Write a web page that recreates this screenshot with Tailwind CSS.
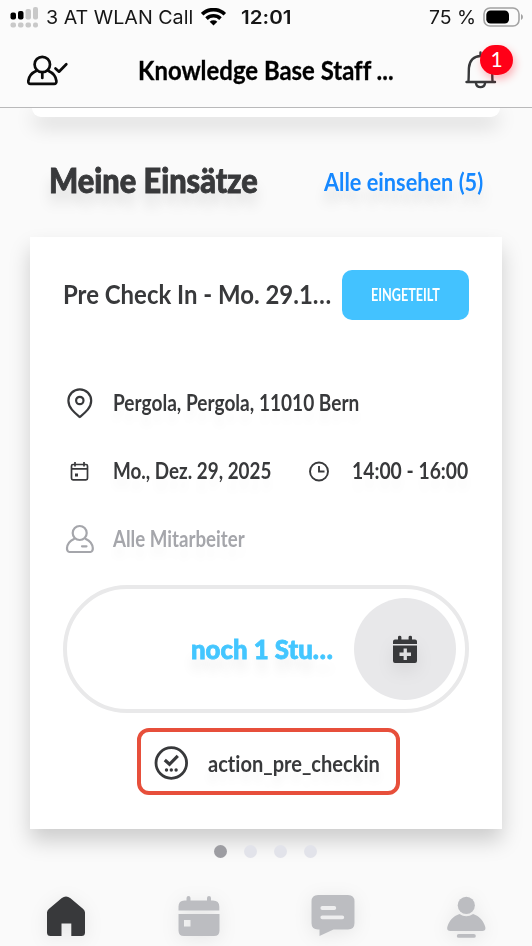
<!DOCTYPE html>
<html lang="de">
<head>
<meta charset="utf-8">
<meta name="viewport" content="width=device-width, initial-scale=1">
<title>Meine Einsätze</title>
<script src="https://cdn.jsdelivr.net/npm/@tailwindcss/browser@4"></script>
</head>
<body class="bg-[#fafafa]">
<div class="relative flex h-[946px] w-[532px] flex-col overflow-hidden bg-[#fafafa] font-['Lato','Open_Sans',sans-serif] text-[#38393b] [font-variant-ligatures:none]">

  <header class="relative z-10 h-[108px] shrink-0 border-b-[1.5px] border-[#b9b9ba] bg-[#fbfbfb] text-black">
    <div class="flex h-[34px] items-center pl-[10px] font-['Inter',sans-serif] text-[19px] leading-[32px] text-[#161616]">
      <svg class="mr-2 h-[22px] w-[28px] shrink-0" viewBox="10 5 28 22">
        <g fill="#000"><rect x="10.500" y="11.500" width="5.500" height="7" rx="2"/><rect x="18" y="10" width="5.500" height="8.500" rx="2"/></g>
        <g fill="#c9c9c9"><rect x="25.500" y="8" width="5.500" height="10.500" rx="2"/><rect x="33" y="6" width="5" height="12.500" rx="2"/><rect x="10.500" y="21.500" width="5.500" height="5" rx="2"/><rect x="18" y="21.500" width="5.500" height="5" rx="2"/><rect x="25.500" y="21.500" width="5.500" height="5" rx="2"/><rect x="33" y="21.500" width="5" height="5" rx="2"/></g>
      </svg>
      <div class="w-[155px] pt-[2px]"><span class="inline-block origin-left whitespace-nowrap" data-fit="147">3 AT WLAN Call</span></div>
      <svg class="h-[18px] w-[26px] shrink-0" viewBox="201 8 26 18" fill="none" stroke="#000" stroke-width="3.600">
        <path d="M202.200 14.200a16.200 16.200 0 0 1 22.600 0"/><path d="M206.500 18.600a10.200 10.200 0 0 1 14 0"/><path d="M213.500 25.500l-3.800-3.800a5.600 5.600 0 0 1 7.600 0z" fill="#000" stroke="none"/>
      </svg>
      <div class="ml-[14px] w-[188px] pt-[2px] font-semibold"><span class="inline-block origin-left whitespace-nowrap" data-fit="51">12:01</span></div>
      <div class="w-[53px] pt-[2px]"><span class="inline-block origin-left whitespace-nowrap" data-fit="47">75 %</span></div>
      <svg class="h-[20px] w-[42px] shrink-0" viewBox="482 6 42 20">
        <rect x="484" y="7" width="35" height="18" rx="6" fill="none" stroke="#a3a3a3" stroke-width="1.600"/><rect x="486.300" y="9.500" width="22.700" height="13" rx="4.300"/><path d="M521 13v6q2-1 2-3t-2-3" fill="#a3a3a3"/>
      </svg>
    </div>
    <div class="flex h-[73px] items-center pl-[26px]">
      <svg class="h-[34px] w-[44px] shrink-0" viewBox="26 53.500 44 34" fill="none" stroke="#0b0b0b" stroke-width="2.700" stroke-linecap="round" stroke-linejoin="round">
        <circle cx="42.300" cy="64" r="7.700"/><path d="M36.500 70.300c-4.500 2-7.700 5.700-8.200 10.200-.2 1.800.7 2.800 2.200 2.800h23.700c1.500 0 2.400-1 2.200-2.800-.5-4.500-3.700-8.200-8.200-10.200M42.300 72v5.500M55.500 68l3.500 3.200 7.300-7.400"/>
      </svg>
      <h1 class="ml-[68px] w-[326px] pb-[2px] text-[27px] leading-[34px] font-bold [-webkit-text-stroke:0.3px]"><span class="inline-block origin-left whitespace-nowrap" data-fit="256">Knowledge Base Staff ...</span></h1>
      <div class="relative">
        <svg class="h-[40px] w-[34px]" viewBox="464 51 34 40" fill="none" stroke="#38393b" stroke-width="2.400" stroke-linecap="round">
          <path d="M480.500 52.500v3M466.500 82h28.500M468.500 81c.3-4 .2-8 .4-13 .4-7.500 5.200-12 11.600-12s11.200 4.500 11.600 12c.2 5 .1 9 .4 13M476 83.500a4.600 4.600 0 0 0 9 0"/>
        </svg>
        <div class="absolute top-[-6px] left-[16px] flex h-[30px] w-[33px] items-center justify-center rounded-full bg-[#ff0017] pb-[3px] text-[21px] leading-none text-white shadow-[2px_4px_8px_rgba(255,0,23,0.3)]">1</div>
      </div>
    </div>
  </header>

  <main class="flex flex-col px-[30px]">
    <div class="mx-[2px] h-[9px] shrink-0 rounded-b-[10px] bg-white shadow-[0_8px_20px_rgba(0,0,0,0.2)]"></div>
    <div class="flex h-[120px] items-center pt-[7px] pl-[19px] text-shadow-[0_12px_14px_rgba(0,0,0,0.13)]">
      <h2 class="w-[275px] shrink-0 pb-[1px] text-[34px] leading-[40px] font-black [-webkit-text-stroke:0.9px]"><span class="inline-block origin-left whitespace-nowrap" data-fit="209">Meine Einsätze</span></h2>
      <a class="shrink-0 text-[25px] leading-[30px] font-bold whitespace-nowrap text-[#1688ff]"><span class="inline-block origin-left whitespace-nowrap" data-fit="159">Alle einsehen (5)</span></a>
    </div>

    <section class="flex h-[592px] flex-col bg-white px-[33px] pt-[33px] shadow-[0_12px_20px_rgba(0,0,0,0.18)]">
      <div class="flex h-[50px] items-center justify-between">
        <h3 class="w-[278px] pb-[2px] text-[27.500px] leading-[34px] font-bold"><span class="inline-block origin-left whitespace-nowrap" data-fit="268">Pre Check In - Mo. 29.1…</span></h3>
        <div class="flex h-[50px] w-[127px] shrink-0 justify-start rounded-[10px] bg-[#43c2ff] pl-[29px] text-[16.500px] leading-[50px] font-bold text-white"><span class="inline-block origin-left whitespace-nowrap" data-fit="69">EINGETEILT</span></div>
      </div>

      <div class="mt-[48px] text-[23.500px] leading-[68px] font-bold text-shadow-[0_12px_10px_rgba(0,0,0,0.03)]">
        <div class="flex h-[68px] items-center">
          <svg class="mr-[16px] h-[34px] w-[34px] shrink-0" viewBox="63 385 34 34" fill="none" stroke="#38393b" stroke-width="2.200" stroke-linejoin="round"><path d="M79.800 417C75 413 68.400 408 68.400 400.700a11.400 11.400 0 0 1 22.800 0C91.200 408 84.600 413 79.800 417z"/><circle cx="79.800" cy="400.500" r="3.700"/></svg>
          <span class="inline-block origin-left whitespace-nowrap" data-fit="246">Pergola, Pergola, 11010 Bern</span>
        </div>
        <div class="flex h-[68px] items-center">
          <svg class="mr-[16px] h-[34px] w-[34px] shrink-0" viewBox="63 453 34 34" fill="none" stroke="#38393b" stroke-width="1.700"><rect x="71.500" y="464.500" width="16" height="15.300" rx="1.500"/><path d="M71.500 468.800h16M75 462v4.500M84 462v4.500"/><rect x="75" y="473.500" width="3" height="3" fill="#38393b" stroke="none"/></svg>
          <div class="w-[188px] shrink-0"><span class="inline-block origin-left whitespace-nowrap" data-fit="158">Mo., Dez. 29, 2025</span></div>
          <svg class="mr-[17px] h-[34px] w-[34px] shrink-0" viewBox="301 453 34 34" fill="none" stroke="#38393b" stroke-width="1.900"><circle cx="319" cy="471.500" r="9"/><path d="M319 466v5.500h5.500"/></svg>
          <span class="inline-block origin-left whitespace-nowrap" data-fit="116">14:00 - 16:00</span>
        </div>
        <div class="flex h-[68px] items-center text-[#a5a6ab]">
          <svg class="mr-[16px] h-[34px] w-[34px] shrink-0" viewBox="63 521 34 34" fill="none" stroke="currentColor" stroke-width="2.200" stroke-linecap="round" stroke-linejoin="round"><circle cx="79.700" cy="533" r="7"/><path d="M74 539c-4 1.800-6.600 5-7 9-.2 2 .8 4 2.400 4h21c1.600 0 2.600-2 2.400-4-.4-4-3-7.200-7-9M82 546.300h4.500"/></svg>
          <span class="inline-block origin-left whitespace-nowrap" data-fit="132">Alle Mitarbeiter</span>
        </div>
      </div>

      <div class="mt-[13px] flex h-[128px] w-[406px] shrink-0 items-center rounded-[64px] border-[4.500px] border-[#e9e9ea] pl-[124px]">
        <div class="w-[163px] shrink-0 pb-[1px] text-[26.500px] leading-[34px] font-black text-[#43c6ff] text-shadow-[0_12px_12px_rgba(0,0,0,0.08)] [-webkit-text-stroke:0.8px]"><span class="inline-block origin-left whitespace-nowrap" data-fit="142">noch 1 Stu…</span></div>
        <div class="flex size-[102px] shrink-0 items-center justify-center rounded-full bg-[#e8e8ea]">
          <svg class="h-[28px] w-[26px] drop-shadow-[0_8px_8px_rgba(0,0,0,0.08)]" viewBox="392 635 26 28" fill="#38393b"><path d="M393 644v-2.500q0-2 2-2h3V637q0-1.300 1.700-1.300t1.700 1.300v2.500h7.200V637q0-1.300 1.700-1.300t1.700 1.300v2.500h3q2 0 2 2v2.500z"/><path fill-rule="evenodd" d="M393 645.500h24v15.500q0 2-2 2h-20q-2 0-2-2zM403.600 648.500v4.100h-4.100v3.300h4.100v4.100h3.300v-4.100h4.100v-3.300h-4.100v-4.100z"/></svg>
        </div>
      </div>

      <div class="mt-[15px] ml-[74px] flex h-[67px] w-[263px] shrink-0 items-center rounded-[12px] border-4 border-[#e74f3b] pt-[3px] pl-[11px]">
        <svg class="mr-[18px] h-[38px] w-[38px] shrink-0" viewBox="152 744.500 38 38" fill="none" stroke="#38393b" stroke-width="2.800"><circle cx="171.300" cy="763.500" r="15.300"/><path d="M164.800 760.500l4.700 4.300 8.300-8.500" stroke-width="3.200"/><g fill="#38393b" stroke="none"><circle cx="166.500" cy="770.500" r="1.700"/><circle cx="171.300" cy="770.500" r="1.700"/><circle cx="176.100" cy="770.500" r="1.700"/></g></svg>
        <span class="inline-block origin-left text-[23px] leading-[40px] font-bold whitespace-nowrap text-shadow-[0_10px_10px_rgba(0,0,0,0.05)]" data-fit="172">action_pre_checkin</span>
      </div>
    </section>

    <div class="flex h-[35px] items-start justify-center gap-[17px] pt-[16px] pr-[1px]">
      <i class="size-[13px] rounded-full bg-[#9d9da2]"></i><i class="size-[13px] rounded-full bg-[#e2e3ea]"></i><i class="size-[13px] rounded-full bg-[#e2e3ea]"></i><i class="size-[13px] rounded-full bg-[#e2e3ea]"></i>
    </div>
  </main>

  <nav class="relative z-10 flex h-[82px] shrink-0 items-start justify-between bg-[#fafafa] pt-[26px] pr-[43px] pl-[44px]">
    <svg class="h-[50px] w-[44px] drop-shadow-[0_3px_9px_rgba(0,0,0,0.08)]" viewBox="44 890 44 50" fill="#38393b"><path d="M61.500 898.200q4.500-3.500 9 0L83.200 909q1.800 1.500 1.800 3.500v20q0 3.500-3.500 3.500H71.300v-12.500h-9.800V936h-11q-3.500 0-3.500-3.500v-20q0-2 1.800-3.500z"/></svg>
    <svg class="h-[50px] w-[46px] drop-shadow-[0_3px_9px_rgba(0,0,0,0.08)]" viewBox="175.500 890 46 50" fill="#bcbdc1"><path d="M179 910.500v-4q0-6 6-6h2V898q0-2 2-2t2 2v2.500h16.500V898q0-2 2-2t2 2v2.500h2q6.300 0 6.300 6v4z"/><path fill-rule="evenodd" d="M179 914h41v16.500q0 5.500-5.500 5.500h-30q-5.500 0-5.500-5.500zm5.500 6v6.500h6.500V920z"/></svg>
    <svg class="h-[50px] w-[48px] drop-shadow-[0_3px_9px_rgba(0,0,0,0.08)]" viewBox="308 890 48 50" fill="#bcbdc1"><path d="M318 895h30q6.500 0 6.500 6.500v21.500q0 6.500-6.500 6.500h-14.500L319.500 936v-6.500H318q-6.500 0-6.500-6.500v-21.500q0-6.500 6.500-6.500z"/><path d="M322.300 908h12M322.300 917.300h20" stroke="#eeeeef" stroke-width="3.800" stroke-linecap="round"/></svg>
    <svg class="h-[50px] w-[46px] drop-shadow-[0_3px_9px_rgba(0,0,0,0.08)]" viewBox="443 890 46 50" fill="#bcbdc1"><circle cx="466.300" cy="905.300" r="8.600"/><path d="M459.500 914q6.800 4.500 13.600 0c6.500 2.200 10.500 7 12.200 13q.8 4-3 4h-32q-3.800 0-3-4c1.700-6 5.700-10.800 12.200-13z"/><rect x="456.800" y="934" width="19" height="3.800" rx="1.900"/></svg>
  </nav>
</div>
<script>
  // Condense each label horizontally to its designed width, whenever its natural width changes.
  const fit = el => { if (el.offsetWidth) el.style.transform = 'scaleX(' + el.dataset.fit / el.offsetWidth + ')'; };
  const observer = new ResizeObserver(entries => entries.forEach(e => fit(e.target)));
  document.querySelectorAll('[data-fit]').forEach(el => { fit(el); observer.observe(el); });
  window.addEventListener('load', () => document.querySelectorAll('[data-fit]').forEach(fit));
</script>
</body>
</html>
